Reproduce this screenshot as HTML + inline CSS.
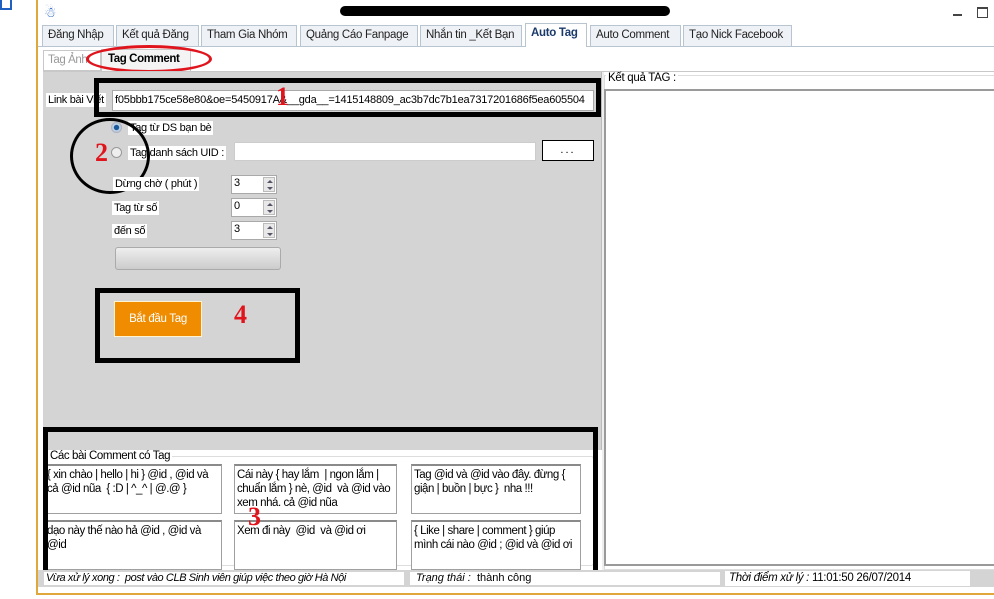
<!DOCTYPE html>
<html><head><meta charset="utf-8"><style>
*{box-sizing:border-box;margin:0;padding:0}
body{width:994px;height:599px;background:#fff;position:relative;overflow:hidden;font-family:"Liberation Sans",sans-serif;font-size:11px;color:#000}
div{white-space:nowrap}
.a{position:absolute}
.tab{position:absolute;top:25px;height:21px;border:1px solid #b8c4d0;border-bottom:none;background:#eef2f6;font-size:11.5px;letter-spacing:-0.3px;line-height:19px;padding-left:5px;color:#222;overflow:hidden}
.lbl{position:absolute;background:#fff;font-size:11px;letter-spacing:-0.3px;line-height:14px;padding:0 2px}
.w{position:absolute;background:#fff;border:1px solid #a9a9a9}
.spin{position:absolute;width:46px;height:19px;background:#fff;border:1px solid #a9a9a9;font-size:11px;padding:1px 2px}
.spin i{position:absolute;right:1px;top:1px;width:12px;height:15px;background:#e8e8e8;border:1px solid #bbb}
.spin i:before{content:"";position:absolute;left:3px;top:2px;border:3px solid transparent;border-bottom:3px solid #556;border-top:none}
.spin i:after{content:"";position:absolute;left:3px;top:9px;border:3px solid transparent;border-top:3px solid #556;border-bottom:none}
.box{position:absolute;border:5px solid #000}
.num{position:absolute;color:#e0141c;font-family:"Liberation Serif",serif;font-weight:bold;font-size:26px}
.cm{position:absolute;background:#fff;border:1px solid #a0a0a0;border-top:2px solid #8a8a8a;font-size:11.5px;line-height:14px;padding:2px 2px;letter-spacing:-0.45px;white-space:normal;overflow:hidden}
</style></head><body>
<div class="a" style="left:0;top:0;width:12px;height:10px;border:2px solid #2060c0;border-top:none"></div>
<div class="a" style="left:36px;top:0;width:2px;height:595px;background:#e0a83a"></div>
<div class="a" style="left:36px;top:593px;width:958px;height:2px;background:#e0a83a"></div>
<div class="a" style="left:44px;top:4px;color:#2060c0;font-size:14px">&#9731;</div>
<div class="a" style="left:340px;top:6px;width:330px;height:10px;background:#000;border-radius:5px"></div>
<div class="a" style="left:953px;top:14px;width:9px;height:2px;background:#444"></div>
<div class="a" style="left:977px;top:7px;width:11px;height:11px;border:1px solid #444;border-top:2px solid #444"></div>
<div class="a" style="left:38px;top:46px;width:956px;height:1px;background:#b8c4d0"></div>
<div class="tab" style="left:42px;width:72px">Đăng Nhập</div>
<div class="tab" style="left:116px;width:83px">Kết quả Đăng</div>
<div class="tab" style="left:201px;width:96px">Tham Gia Nhóm</div>
<div class="tab" style="left:300px;width:118px">Quảng Cáo Fanpage</div>
<div class="tab" style="left:420px;width:102px">Nhắn tin _Kết Bạn</div>
<div class="tab" style="left:525px;width:62px;background:#fff;top:23px;height:24px;font-weight:bold;color:#1a3a6a">Auto Tag</div>
<div class="tab" style="left:590px;width:91px">Auto Comment</div>
<div class="tab" style="left:683px;width:109px">Tạo Nick Facebook</div>
<div class="a" style="left:43px;top:50px;width:58px;height:21px;border:1px solid #c8c8c8;color:#999;font-size:11.5px;letter-spacing:-0.4px;padding:3px 4px;overflow:hidden">Tag Ảnh</div>
<div class="a" style="left:101px;top:49px;width:90px;height:22px;border:1px solid #c8c8c8;border-bottom:none;background:#f4f4f4;font-weight:bold;font-size:11.5px;letter-spacing:-0.4px;padding:3px 6px">Tag Comment</div>
<div class="a" style="left:86px;top:45px;width:126px;height:28px;border:3px solid #e0141c;border-radius:50%"></div>
<div class="a" style="left:43px;top:71px;width:951px;height:1px;background:#c8c8c8"></div>
<div class="a" style="left:43px;top:72px;width:558px;height:378px;background:#d4d4d4"></div>
<div class="a" style="left:601px;top:72px;width:3px;height:498px;background:#eee;border-left:1px solid #bbb"></div>
<div class="lbl" style="left:46px;top:93px">Link bài Viết</div>
<div class="w" style="left:112px;top:90px;width:482px;height:21px;font-size:11px;letter-spacing:-0.2px;padding:3px 2px;overflow:hidden">f05bbb175ce58e80&amp;oe=5450917A&amp;__gda__=1415148809_ac3b7dc7b1ea7317201686f5ea605504</div>
<div class="box" style="left:94px;top:78px;width:507px;height:39px"></div>
<div class="num" style="left:276px;top:82px">1</div>
<div class="a" style="left:111px;top:122px;width:11px;height:11px;border-radius:50%;background:radial-gradient(#1a5a9a 30%,#cde 40%,#889 90%)"></div>
<div class="lbl" style="left:128px;top:121px">Tag từ DS bạn bè</div>
<div class="a" style="left:111px;top:147px;width:11px;height:11px;border-radius:50%;background:#eee;border:1px solid #999"></div>
<div class="lbl" style="left:128px;top:146px">Tag danh sách UID :</div>
<div class="w" style="left:234px;top:142px;width:302px;height:19px;border-color:#ccc"></div>
<div class="a" style="left:542px;top:140px;width:52px;height:21px;background:#fff;border:1px solid #000;text-align:center;line-height:18px;letter-spacing:2px">...</div>
<div class="a" style="left:70px;top:118px;width:80px;height:76px;border:3px solid #000;border-radius:50%"></div>
<div class="num" style="left:95px;top:138px">2</div>
<div class="lbl" style="left:113px;top:177px">Dừng chờ ( phút )</div>
<div class="spin" style="left:231px;top:175px">3<i></i></div>
<div class="lbl" style="left:112px;top:201px">Tag từ số</div>
<div class="spin" style="left:231px;top:198px">0<i></i></div>
<div class="lbl" style="left:112px;top:224px">đến số</div>
<div class="spin" style="left:231px;top:221px">3<i></i></div>
<div class="a" style="left:115px;top:247px;width:166px;height:23px;border:1px solid #aaa;border-radius:3px;background:linear-gradient(#eee,#e0e0e0 40%,#ccc)"></div>
<div class="box" style="left:95px;top:288px;width:205px;height:75px"></div>
<div class="a" style="left:114px;top:301px;width:88px;height:36px;background:#ef8c00;border:1px solid #fff3d0;color:#fff;font-size:11.5px;letter-spacing:-0.3px;text-align:center;line-height:34px">Bắt đầu Tag</div>
<div class="num" style="left:234px;top:300px">4</div>
<div class="a" style="left:604px;top:75px;width:390px;height:495px;border:1px solid #ddd;border-right:none"></div>
<div class="a" style="left:606px;top:72px;background:#fff;padding:0 2px;font-size:11.5px;letter-spacing:-0.3px">Kết quả TAG :</div>
<div class="a" style="left:604px;top:89px;width:390px;height:477px;background:#fff;border:2px solid #9a9a9a;border-right:none"></div>
<div class="a" style="left:38px;top:450px;width:564px;height:120px;background:#fff"></div>
<div class="a" style="left:44px;top:456px;width:550px;height:110px;border:1px solid #ddd;border-radius:3px"></div>
<div class="a" style="left:48px;top:450px;background:#fff;padding:0 2px;font-size:11.5px;letter-spacing:-0.4px">Các bài Comment có Tag</div>
<div class="cm" style="left:44px;top:464px;width:178px;height:50px">{ xin chào | hello | hi } @id , @id và cả @id nũa&nbsp; { :D | ^_^ | @.@ }</div>
<div class="cm" style="left:234px;top:464px;width:163px;height:50px">Cái này { hay lắm&nbsp; | ngon lắm | chuẩn lắm } nè, @id&nbsp; và @id vào xem nhá. cả @id nũa</div>
<div class="cm" style="left:411px;top:464px;width:170px;height:50px">Tag @id và @id vào đây. đừng { giận | buồn | bực }&nbsp; nha !!!</div>
<div class="cm" style="left:44px;top:520px;width:178px;height:50px">dạo này thế nào hả @id , @id và @id</div>
<div class="cm" style="left:234px;top:520px;width:163px;height:50px">Xem đi này&nbsp; @id&nbsp; và @id ơi</div>
<div class="cm" style="left:411px;top:520px;width:170px;height:50px">{ Like | share | comment } giúp mình cái nào @id ; @id và @id ơi</div>
<div class="box" style="left:43px;top:427px;width:555px;height:152px"></div>
<div class="num" style="left:248px;top:502px">3</div>
<div class="a" style="left:38px;top:570px;width:956px;height:17px;background:#d4d4d4"></div>
<div class="a" style="left:44px;top:572px;width:360px;height:13px;background:#fff;font-style:italic;font-size:11px;letter-spacing:-0.4px;line-height:13px;padding-left:2px;overflow:hidden">Vừa xử lý xong :&nbsp; post vào CLB Sinh viên giúp việc theo giờ Hà Nội</div>
<div class="a" style="left:410px;top:572px;width:310px;height:13px;background:#fff;font-size:11px;line-height:13px;padding-left:6px"><i>Trạng thái :</i>&nbsp; thành công</div>
<div class="a" style="left:725px;top:571px;width:245px;height:15px;background:#fff;font-size:11.5px;letter-spacing:-0.3px;line-height:15px;padding-left:4px"><i>Thời điểm xử lý :</i> 11:01:50 26/07/2014</div>
</body></html>
